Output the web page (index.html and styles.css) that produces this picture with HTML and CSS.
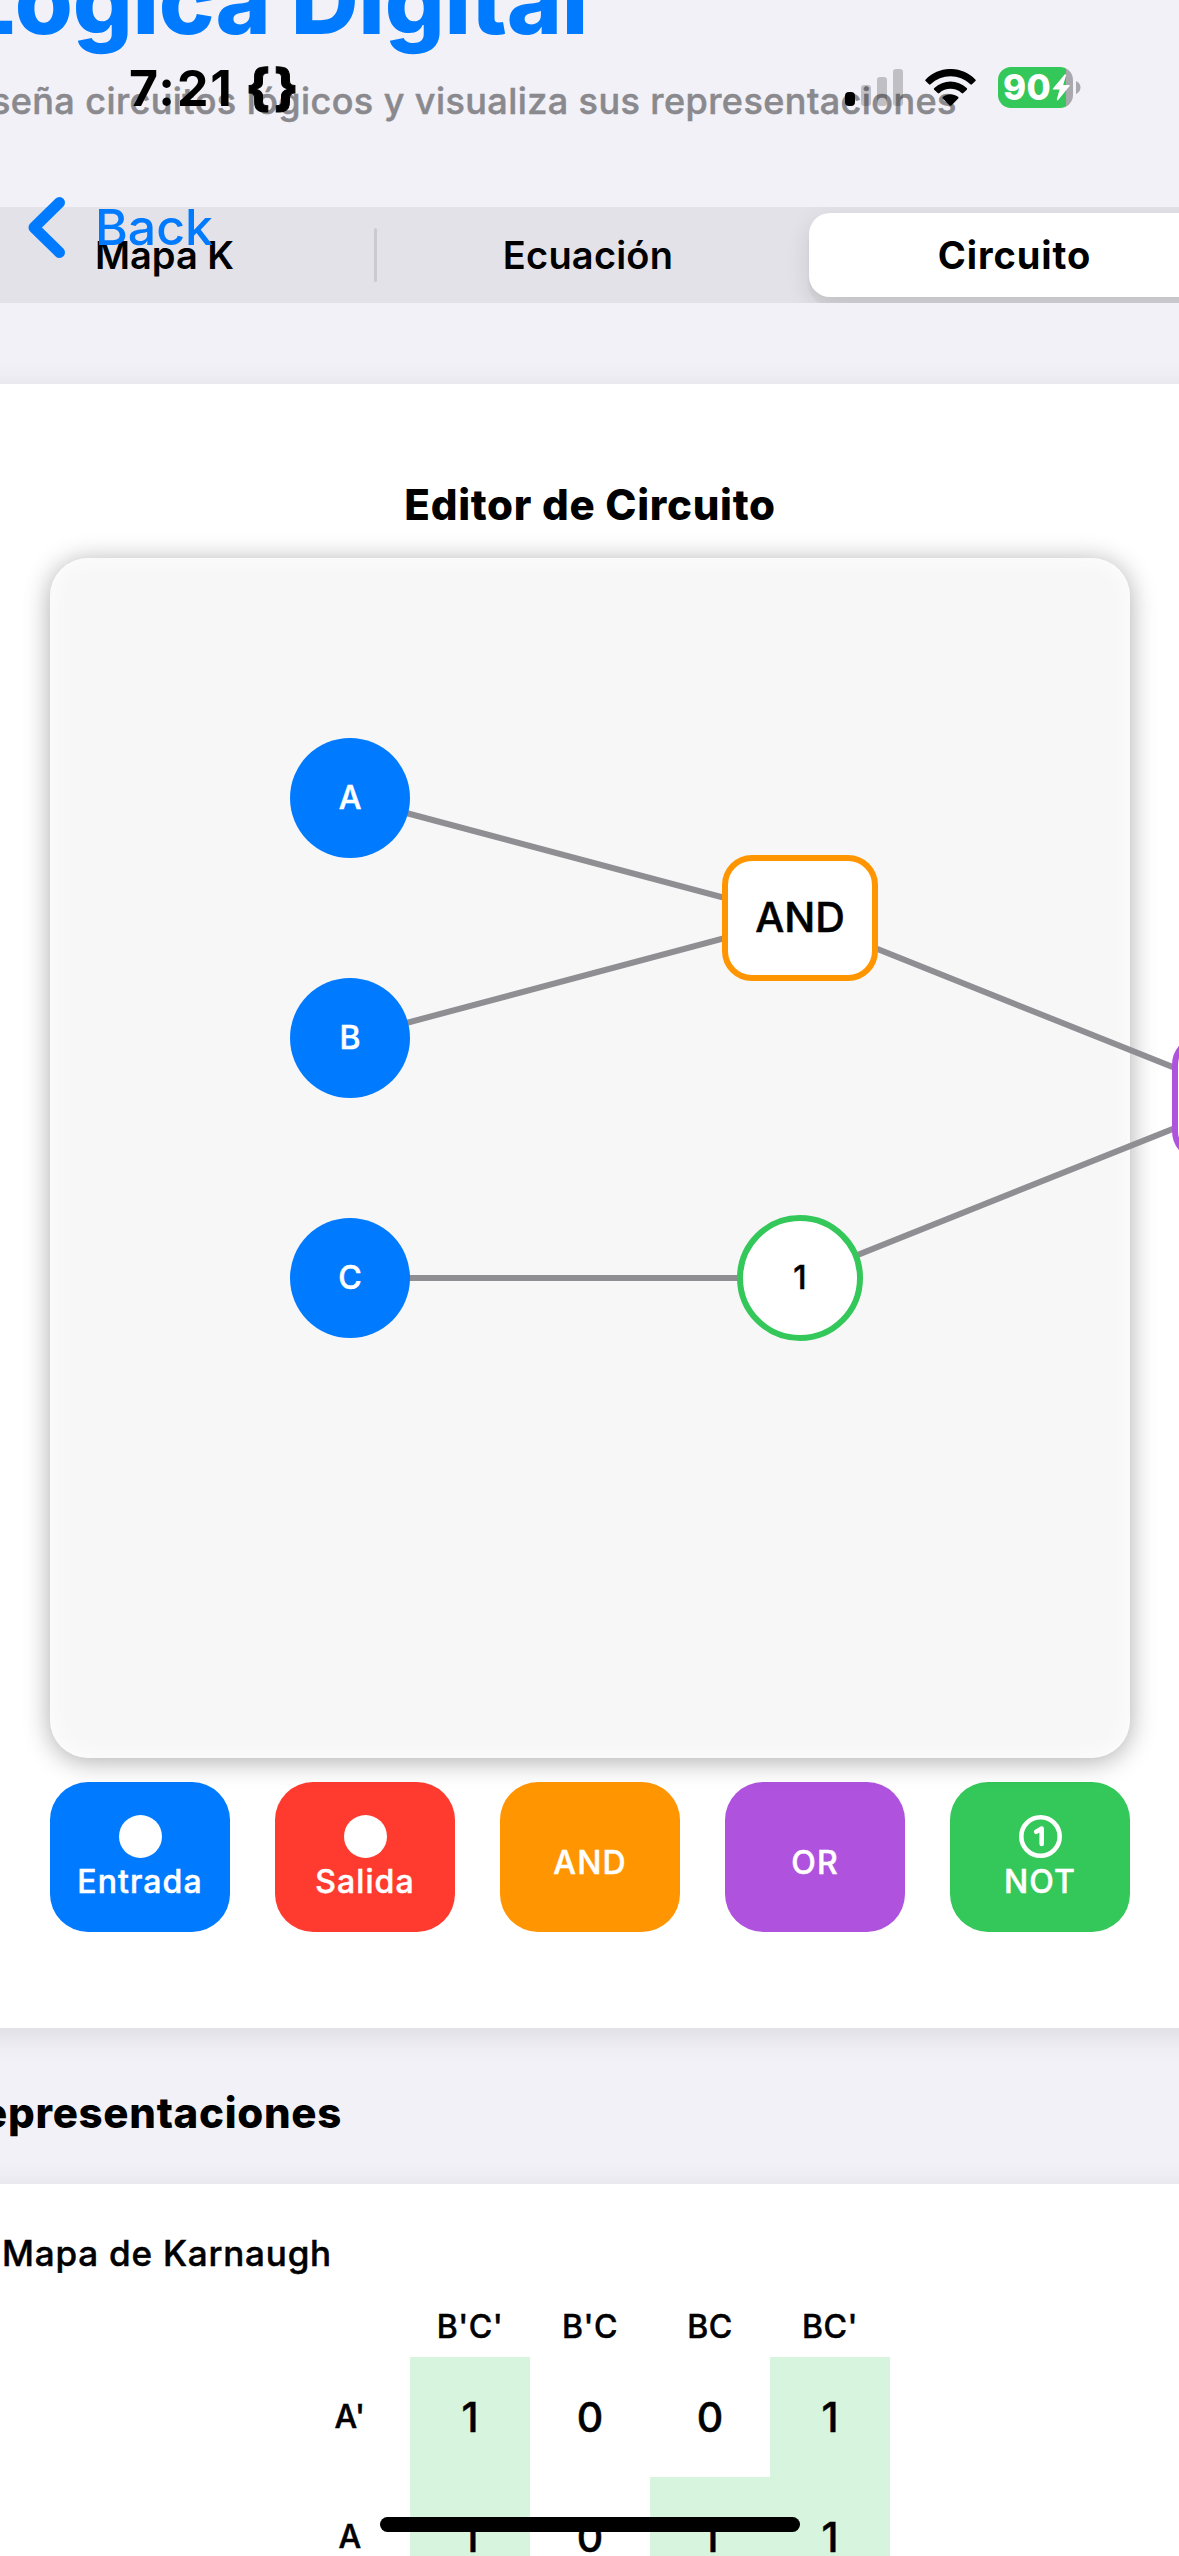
FILE: index.html
```html
<!DOCTYPE html>
<html lang="es">
<head>
<meta charset="utf-8">
<title>Lógica Digital</title>
<link rel="stylesheet" href="styles.css">
</head>
<body>
<main class="page">
  <h1 class="title">Lógica Digital</h1>
  <p class="subtitle">Diseña circuitos lógicos y visualiza sus representaciones</p>

  <nav class="segmented">
    <span class="segment">Mapa K</span>
    <span class="divider"></span>
    <span class="segment segment-eq">Ecuación</span>
    <span class="segment segment-active">Circuito</span>
  </nav>

  <section class="panel editor">
    <h2 class="heading editor-title">Editor de Circuito</h2>
    <div class="canvas">
      <svg class="wires" width="1300" height="1200" viewBox="0 0 1300 1200">
        <path d="M300 240 750 360M300 480 750 360M300 720H750M750 360 1200 540M750 720 1200 540"/>
      </svg>
      <div class="node input node-a">A</div>
      <div class="node input node-b">B</div>
      <div class="node input node-c">C</div>
      <div class="node gate node-and"><span>AND</span></div>
      <div class="node gate node-or"></div>
      <div class="node not">1</div>
    </div>
    <div class="toolbar">
      <button class="tool blue"><span class="dot"></span><span>Entrada</span></button>
      <button class="tool red"><span class="dot"></span><span>Salida</span></button>
      <button class="tool tool-text orange"><span>AND</span></button>
      <button class="tool tool-text purple"><span>OR</span></button>
      <button class="tool green">
        <svg class="one" width="43" height="43" viewBox="0 0 43 43"><circle cx="21.5" cy="21.5" r="19.2"/><path d="M17.2 16.8 22.7 13.6V29"/></svg>
        <span>NOT</span>
      </button>
    </div>
  </section>

  <h2 class="heading reps-title">Representaciones</h2>

  <section class="panel reps">
    <h3 class="map-title">Mapa de Karnaugh</h3>
    <div class="kmap">
      <div class="label"></div><div class="label">B'C'</div><div class="label">B'C</div><div class="label">BC</div><div class="label">BC'</div>
      <div class="label">A'</div><div class="cell on">1</div><div class="cell">0</div><div class="cell">0</div><div class="cell on">1</div>
      <div class="label">A</div><div class="cell on">1</div><div class="cell">0</div><div class="cell on">1</div><div class="cell on">1</div>
    </div>
  </section>
</main>

<div class="statusbar">
  <div class="clock"><span>7:21</span><span class="braces">{}</span></div>
  <div class="indicators">
    <svg class="signal" width="58" height="38" viewBox="0 0 58 38">
      <rect x="0" y="23" width="10" height="14" rx="4"/>
      <g opacity=".2"><rect x="16" y="16" width="10" height="21" rx="3"/><rect x="32" y="8" width="10" height="29" rx="3"/><rect x="48" y="0" width="10" height="37" rx="3"/></g>
    </svg>
    <svg class="wifi" width="51" height="38" viewBox="0 0 51 38">
      <path d="M.7 10.4C14.5-3.5 36.5-3.5 50.3 10.4 50.9 11 50.9 11.6 50.4 12.1L47 15.3C46.5 15.8 45.9 15.8 45.4 15.3 34.4 4.6 16.6 4.6 5.6 15.3 5.1 15.8 4.5 15.8 4 15.3L.6 12.1C.1 11.6.1 11 .7 10.4Z"/>
      <path d="M9.3 19C18.4 10.3 32.6 10.3 41.7 19 42.3 19.6 42.3 20.2 41.8 20.7L38.3 24C37.8 24.5 37.2 24.5 36.6 24 30.3 18.4 20.7 18.4 14.4 24 13.8 24.5 13.2 24.5 12.7 24L9.2 20.7C8.7 20.2 8.7 19.6 9.3 19Z"/>
      <path d="M18 27.8C22.3 24.3 28.7 24.3 33 27.8 33.7 28.4 33.7 29 33.2 29.5L26.4 36.4C25.8 37 25.2 37 24.6 36.4L17.8 29.5C17.3 29 17.3 28.4 18 27.8Z"/>
    </svg>
    <div class="battery"><span class="level">90</span>
      <svg class="bolt" width="19" height="27" viewBox="0 0 19 27"><path d="M12.6.5 1 14.6C.6 15.2.8 15.6 1.5 15.6H7.6L4.8 25.3C4.6 26.4 5.5 26.8 6.2 26L17.6 12C18 11.4 17.8 11 17.1 11H11.2L14 1.5C14.2.4 13.3-.2 12.6.5Z"/></svg>
    </div>
    <svg class="nub" width="5" height="13" viewBox="0 0 5 13"><path d="M0 0C6 2.5 6 10.5 0 13Z"/></svg>
  </div>
</div>

<div class="back">
  <svg width="38" height="62" viewBox="0 0 38 62"><path d="M32.5 6.5 7 31.5 32.5 56.5"/></svg>
  <span>Back</span>
</div>
<div class="home-indicator"></div>
</body>
</html>
```

FILE: styles.css
```css
* { box-sizing: border-box; }
html, body { margin: 0; height: 2556px; overflow: hidden; }
body {
  position: relative;
  background: #f2f1f7;
  color: #000;
  font-family: Inter, "Liberation Sans", sans-serif;
}
.page { width: 1269px; height: 2610px; margin: -54px 0 0 -45px; overflow: hidden; }
h1, h2, h3, p { margin: 0; white-space: nowrap; }

/* slightly heavier than the 500 weight */
.subtitle, .node, .tool, .map-title, .label, .cell { -webkit-text-stroke: .5px currentColor; }

.title { padding-left: 7px; color: #007aff; font-size: 94px; line-height: 108px; font-weight: 800; letter-spacing: -.3px; }
.subtitle { margin-top: 23px; color: #8a898e; font-size: 36px; line-height: 48px; font-weight: 500; letter-spacing: .42px; }

.segmented {
  display: flex;
  align-items: center;
  height: 96px;
  margin-top: 82px;
  overflow: hidden;
  background: #e3e2e8;
  font-size: 38px;
  line-height: 48px;
  font-weight: 600;
}
.segment { width: 419px; text-align: center; }
.divider { width: 3px; height: 54px; border-radius: 2px; background: #cbcad0; }
.segment-eq { width: 432px; padding-right: 10px; letter-spacing: .2px; }
.segment-active {
  width: 411px;
  height: 84px;
  line-height: 85px;
  border-radius: 21px;
  background: #fff;
  font-weight: 700;
  letter-spacing: .9px;
  box-shadow: 0 9px 24px rgba(0,0,0,.12), 0 9px 3px rgba(0,0,0,.04);
}

.panel { background: #fff; box-shadow: 0 6px 30px rgba(0,0,0,.1); }
.heading { font-size: 42px; line-height: 50px; font-weight: 800; letter-spacing: .7px; }
.editor { margin-top: 81px; padding: 96px 94px 96px 95px; }
.editor-title { text-align: center; }
.canvas {
  position: relative;
  height: 1200px;
  margin-top: 28px;
  border-radius: 38px;
  background: #f7f7f7;
  box-shadow: 0 3px 27px rgba(0,0,0,.33), inset 0 0 24px rgba(255,255,255,.9);
}
.wires { position: absolute; left: 0; top: 0; fill: none; stroke: #8e8e93; stroke-width: 6; }
.node { position: absolute; display: flex; align-items: center; justify-content: center; padding-bottom: 1px; font-size: 32px; font-weight: 500; }
.input { left: 240px; width: 120px; height: 120px; border-radius: 50%; background: #007aff; color: #fff; }
.node-a { top: 180px; }
.node-b { top: 420px; }
.node-c { top: 660px; }
.gate { width: 156px; height: 126px; border: 6px solid #ff9500; border-radius: 30px; background: #fff; font-size: 41px; }
.node-and { left: 672px; top: 297px; padding-bottom: 2px; }
.node-or { left: 1122px; top: 477px; border-color: #af52de; }
.not { left: 687px; top: 657px; width: 126px; height: 126px; border: 6px solid #34c759; border-radius: 50%; background: #fff; }

.toolbar { display: flex; justify-content: space-between; margin-top: 24px; }
.tool {
  display: flex;
  flex-direction: column;
  align-items: center;
  justify-content: center;
  gap: 4px;
  width: 180px;
  height: 150px;
  padding: 3px 0 0;
  border: 0;
  border-radius: 38px;
  color: #fff;
  font: 500 32px/40px Inter, "Liberation Sans", sans-serif;
  letter-spacing: 1.1px;
}
.tool-text { padding-top: 11px; }
.dot { width: 43px; height: 43px; border-radius: 50%; background: #fff; }
.one { fill: none; stroke: #fff; stroke-width: 4.6; stroke-linecap: round; stroke-linejoin: round; }
.blue { background: #007aff; }
.red { background: #ff3b30; }
.orange { background: #ff9500; }
.purple { background: #af52de; }
.green { background: #34c759; }

.reps-title { margin-top: 60px; margin-left: -1px; }
.reps { margin-top: 46px; padding: 47px 0 0 47px; height: 600px; }
.map-title { font-size: 35px; line-height: 44px; font-weight: 500; letter-spacing: .8px; }
.kmap { display: grid; grid-template: 50px 120px 120px / repeat(5, 120px); margin: 32px 0 0 288px; }
.label { display: flex; align-items: center; justify-content: center; font-size: 32px; line-height: 40px; font-weight: 500; letter-spacing: .5px; }
.label:nth-child(-n+5) { align-items: flex-start; }
.cell { display: flex; align-items: center; justify-content: center; font-size: 41px; font-weight: 500; }
.on { background: #d7f4de; }

.statusbar {
  position: absolute;
  left: 0;
  right: 0;
  top: 58px;
  height: 60px;
  padding: 0 98px 0 129px;
  display: flex;
  justify-content: space-between;
}
.clock { display: flex; gap: 12px; font-size: 50px; line-height: 60px; font-weight: 700; letter-spacing: 1.9px; }
.braces { margin-top: -1px; font-weight: 800; letter-spacing: 4px; -webkit-text-stroke: 1px #000; }
.indicators { display: flex; align-items: flex-start; }
.signal { margin: 11px 22px 0 0; }
.wifi { margin: 11px 22px 0 0; }
.battery {
  display: flex;
  align-items: center;
  width: 75px;
  height: 41px;
  margin-top: 9px;
  padding-left: 5px;
  border-radius: 13px;
  background: linear-gradient(90deg, #34c759 68px, #a9a8ad 68px);
  color: #fff;
}
.level { width: 48px; font-size: 35px; line-height: 41px; font-weight: 800; letter-spacing: .4px; }
.bolt { margin-left: 1px; flex: none; fill: #fff; }
.nub { margin: 23px 0 0 3px; fill: #a9a8ad; }

.back { position: absolute; left: 27px; top: 196px; display: flex; color: #007aff; font-size: 50px; line-height: 62px; font-weight: 500; }
.back svg { fill: none; stroke: #007aff; stroke-width: 11; stroke-linecap: round; stroke-linejoin: round; }
.back span { margin-left: 30px; }
.home-indicator { position: absolute; left: 380px; top: 2517px; width: 420px; height: 15px; border-radius: 8px; background: #000; }
```
